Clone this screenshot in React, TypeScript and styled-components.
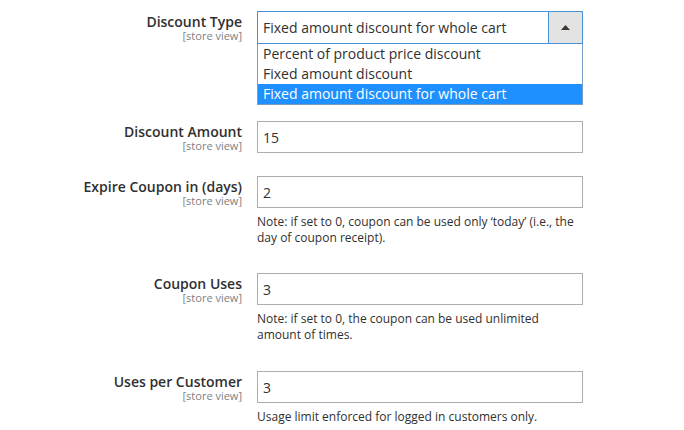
import styled, { createGlobalStyle } from "styled-components";

const GlobalStyle = createGlobalStyle`
  html, body {
    margin: 0;
    padding: 0;
    background: #ffffff;
  }
  body {
    font-family: "Open Sans", "Liberation Sans", sans-serif;
    color: #303030;
  }
`;

const Form = styled.div`
  padding-top: 11px;
  width: 684px;
`;

/** One labelled row: label column on the left, control column on the right */
const Field = styled.div<{ $gap: number }>`
  display: grid;
  grid-template-columns: 242px 326px;
  column-gap: 15px;
  margin-bottom: ${({ $gap }) => $gap}px;
`;

const LabelCol = styled.div`
  text-align: right;
  padding-top: 2px;
`;

const LabelText = styled.div`
  font-size: 14px;
  line-height: 17px;
  font-weight: 600;
  color: #303030;
`;

const Scope = styled.div`
  margin-top: -1px;
  font-size: 11px;
  line-height: 13px;
  color: #808080;
`;

const Control = styled.div`
  display: flex;
  flex-direction: column;
`;

const TextInput = styled.div`
  box-sizing: border-box;
  height: 32px;
  border: 1px solid #adadad;
  padding: 0 5px;
  display: flex;
  align-items: center;
  font-size: 14px;
  color: #303030;
`;

const SelectBox = styled.div`
  box-sizing: border-box;
  height: 33px;
  border: 1px solid #4a90d6;
  display: flex;
  align-items: stretch;
`;

const SelectValue = styled.div`
  flex: 1;
  display: flex;
  align-items: center;
  padding: 0 5px;
  font-size: 14px;
  color: #303030;
`;

const ArrowButton = styled.div`
  width: 33px;
  background: #e3e3e3;
  border-left: 1px solid #4a90d6;
  display: flex;
  align-items: center;
  justify-content: center;
`;

const OptionList = styled.div`
  border: 1px solid #7a9cc6;
  border-top: none;
`;

const Option = styled.div<{ $selected?: boolean }>`
  height: 20px;
  line-height: 20px;
  padding: 0 5px;
  font-size: 14px;
  color: ${({ $selected }) => ($selected ? "#ffffff" : "#303030")};
  background: ${({ $selected }) => ($selected ? "#1e90ff" : "transparent")};
`;

const Note = styled.div`
  margin-top: 6px;
  font-size: 12px;
  line-height: 16px;
  color: #303030;
  padding-right: 4px;
`;

const options = [
  "Percent of product price discount",
  "Fixed amount discount",
  "Fixed amount discount for whole cart",
];

function Label({ text }: { text: string }) {
  return (
    <LabelCol>
      <LabelText>{text}</LabelText>
      <Scope>[store view]</Scope>
    </LabelCol>
  );
}

export default function App() {
  return (
    <>
      <GlobalStyle />
      <Form>
        <Field $gap={16}>
          <Label text="Discount Type" />
          <Control>
            <SelectBox>
              <SelectValue>Fixed amount discount for whole cart</SelectValue>
              <ArrowButton>
                <svg width="9" height="5" viewBox="0 0 9 5">
                  <path d="M0 5 L4.5 0 L9 5 Z" fill="#41362f" />
                </svg>
              </ArrowButton>
            </SelectBox>
            <OptionList>
              {options.map((o, i) => (
                <Option key={o} $selected={i === options.length - 1}>
                  {o}
                </Option>
              ))}
            </OptionList>
          </Control>
        </Field>

        <Field $gap={23}>
          <Label text="Discount Amount" />
          <Control>
            <TextInput>15</TextInput>
          </Control>
        </Field>

        <Field $gap={27}>
          <Label text="Expire Coupon in (days)" />
          <Control>
            <TextInput>2</TextInput>
            <Note>
              Note: if set to 0, coupon can be used only ‘today’ (i.e., the day
              of coupon receipt).
            </Note>
          </Control>
        </Field>

        <Field $gap={28}>
          <Label text="Coupon Uses" />
          <Control>
            <TextInput>3</TextInput>
            <Note>
              Note: if set to 0, the coupon can be used unlimited amount of
              times.
            </Note>
          </Control>
        </Field>

        <Field $gap={0}>
          <Label text="Uses per Customer" />
          <Control>
            <TextInput>3</TextInput>
            <Note>Usage limit enforced for logged in customers only.</Note>
          </Control>
        </Field>
      </Form>
    </>
  );
}
